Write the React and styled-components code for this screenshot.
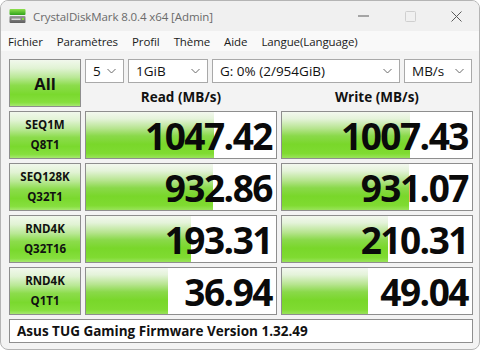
import React from "react";
import styled, { createGlobalStyle } from "styled-components";

const GlobalStyle = createGlobalStyle`
  html, body { margin: 0; padding: 0; background: #ffffff; }
  body { font-family: "Open Sans", "Noto Sans", sans-serif; }
  * { box-sizing: border-box; }
`;

const Window = styled.div`
  width: 480px;
  height: 350px;
  border: 1px solid #b4b4b4;
  border-radius: 8px;
  overflow: hidden;
  background: #f3f3f3;
  display: flex;
  flex-direction: column;
`;

const TitleBar = styled.div`
  height: 30px;
  display: flex;
  align-items: center;
  background: #f0f0f0;
  padding-left: 8px;
`;

const TitleText = styled.div`
  margin-left: 7px;
  font-size: 11.5px;
  color: #6a6a6a;
  flex: 1;
  letter-spacing: -0.1px;
`;

const CtrlBox = styled.div`
  width: 46px;
  height: 30px;
  display: flex;
  align-items: center;
  justify-content: center;
`;

const MenuBar = styled.div`
  height: 20px;
  display: flex;
  align-items: center;
  background: #f9f9f9;
  padding-left: 7px;
  gap: 14px;
`;

const MenuItem = styled.span`
  font-size: 11.5px;
  color: #1b1b1b;
  letter-spacing: -0.1px;
`;

const Content = styled.div`
  flex: 1;
  padding: 8px 0 0 8px;
  display: grid;
  grid-template-columns: 72px 192px 192px;
  grid-template-rows: 24px 20px repeat(4, 48px) 24px;
  gap: 4px;
`;

const greenButton = `
  background: linear-gradient(to bottom,
    #f1f8ec 0%, #e1f3d4 18%, #b9e895 38%, #8cdc4c 55%, #7ad92e 75%, #86df3e 92%, #a6e870 100%);
  border: 1px solid #8e8e8e;
  color: #111;
  font-weight: 700;
  display: flex;
  flex-direction: column;
  align-items: center;
  justify-content: center;
`;

const AllButton = styled.div`
  ${greenButton}
  grid-row: 1 / span 2;
  font-size: 16.5px;
`;

const TestButton = styled.div`
  ${greenButton}
  font-size: 11.5px;
  line-height: 20px;
`;

const Controls = styled.div`
  grid-column: 2 / span 2;
  display: flex;
  gap: 4px;
`;

const Select = styled.div`
  width: ${(p) => p.$w}px;
  height: 24px;
  background: #ffffff;
  border: 1px solid #a9a9a9;
  display: flex;
  align-items: center;
  padding: 0 7px 0 7px;
  font-size: 13.5px;
  color: #111;
`;

const SelectLabel = styled.span`
  flex: 1;
  white-space: nowrap;
  overflow: hidden;
`;

const Header = styled.div`
  display: flex;
  align-items: flex-end;
  justify-content: center;
  font-weight: 700;
  font-size: 13.5px;
  color: #111;
  line-height: 20px;
`;

const ValueCell = styled.div`
  position: relative;
  background: #ffffff;
  border: 1px solid #8e8e8e;
  display: flex;
  align-items: center;
  justify-content: flex-end;
  padding-right: 4px;
  overflow: hidden;
`;

const Bar = styled.div`
  position: absolute;
  left: 0;
  top: 0;
  bottom: 0;
  background: linear-gradient(to bottom,
    #f3f8ef 0%, #e4f3d9 15%, #b6e48e 36%, #8ad94a 52%, #79d72a 70%, #7fdb31 90%, #99e35a 100%);
`;

const Value = styled.span`
  position: relative;
  font-weight: 700;
  font-size: 37px;
  letter-spacing: -1.5px;
  color: #0a0a0a;
  line-height: 1;
`;

const Comment = styled.div`
  grid-column: 1 / span 3;
  background: #ffffff;
  border: 1px solid #8e8e8e;
  display: flex;
  align-items: center;
  padding-left: 7px;
  font-weight: 700;
  font-size: 13.5px;
  color: #111;
`;

const Chevron = () => (
  <svg width="9" height="6" viewBox="0 0 9 6">
    <polyline points="0.5,1 4.5,5 8.5,1" fill="none" stroke="#6b6b6b" strokeWidth="1" />
  </svg>
);

const AppIcon = () => (
  <svg width="17" height="16" viewBox="0 0 17 16">
    <defs>
      <linearGradient id="ig" x1="0" y1="0" x2="0" y2="1">
        <stop offset="0" stopColor="#8fe04d" />
        <stop offset="1" stopColor="#2fa21a" />
      </linearGradient>
      <linearGradient id="gg" x1="0" y1="0" x2="0" y2="1">
        <stop offset="0" stopColor="#9a9a9a" />
        <stop offset="1" stopColor="#5e5e5e" />
      </linearGradient>
    </defs>
    <rect x="0.5" y="1" width="16" height="6" rx="1" fill="url(#ig)" />
    <rect x="0.5" y="8" width="16" height="7" rx="1" fill="url(#gg)" />
    <rect x="2.5" y="10.5" width="9" height="1.5" fill="#d8d8d8" />
    <rect x="13" y="10" width="2" height="2" fill="#7fe03a" />
  </svg>
);

const rows = [
  { a: "SEQ1M", b: "Q8T1", r: "1047.42", rw: 128, w: "1007.43", ww: 128 },
  { a: "SEQ128K", b: "Q32T1", r: "932.86", rw: 127, w: "931.07", ww: 127 },
  { a: "RND4K", b: "Q32T16", r: "193.31", rw: 105, w: "210.31", ww: 106 },
  { a: "RND4K", b: "Q1T1", r: "36.94", rw: 82, w: "49.04", ww: 86 },
];

export default function App() {
  return (
    <>
      <GlobalStyle />
      <Window>
        <TitleBar>
          <AppIcon />
          <TitleText>CrystalDiskMark 8.0.4 x64 [Admin]</TitleText>
          <CtrlBox>
            <svg width="12" height="2" viewBox="0 0 12 2">
              <line x1="0" y1="1" x2="11" y2="1" stroke="#5a5a5a" strokeWidth="1" />
            </svg>
          </CtrlBox>
          <CtrlBox>
            <svg width="11" height="11" viewBox="0 0 11 11">
              <rect x="0.5" y="0.5" width="10" height="10" rx="1" fill="none" stroke="#cfcfcf" strokeWidth="1" />
            </svg>
          </CtrlBox>
          <CtrlBox>
            <svg width="11" height="11" viewBox="0 0 11 11">
              <path d="M0.5 0.5 L10.5 10.5 M10.5 0.5 L0.5 10.5" stroke="#5a5a5a" strokeWidth="1" />
            </svg>
          </CtrlBox>
        </TitleBar>
        <MenuBar>
          <MenuItem>Fichier</MenuItem>
          <MenuItem>Paramètres</MenuItem>
          <MenuItem>Profil</MenuItem>
          <MenuItem>Thème</MenuItem>
          <MenuItem>Aide</MenuItem>
          <MenuItem>Langue(Language)</MenuItem>
        </MenuBar>
        <Content>
          <AllButton>All</AllButton>
          <Controls>
            <Select $w={39}><SelectLabel>5</SelectLabel><Chevron /></Select>
            <Select $w={80}><SelectLabel>1GiB</SelectLabel><Chevron /></Select>
            <Select $w={188}><SelectLabel>G: 0% (2/954GiB)</SelectLabel><Chevron /></Select>
            <Select $w={68}><SelectLabel>MB/s</SelectLabel><Chevron /></Select>
          </Controls>
          <Header>Read (MB/s)</Header>
          <Header>Write (MB/s)</Header>
          {rows.map((row, i) => (
            <React.Fragment key={i}>
              <TestButton>
                <span>{row.a}</span>
                <span>{row.b}</span>
              </TestButton>
              <ValueCell>
                <Bar style={{ width: row.rw }} />
                <Value>{row.r}</Value>
              </ValueCell>
              <ValueCell>
                <Bar style={{ width: row.ww }} />
                <Value>{row.w}</Value>
              </ValueCell>
            </React.Fragment>
          ))}
          <Comment>Asus TUG Gaming Firmware Version 1.32.49</Comment>
        </Content>
      </Window>
    </>
  );
}
